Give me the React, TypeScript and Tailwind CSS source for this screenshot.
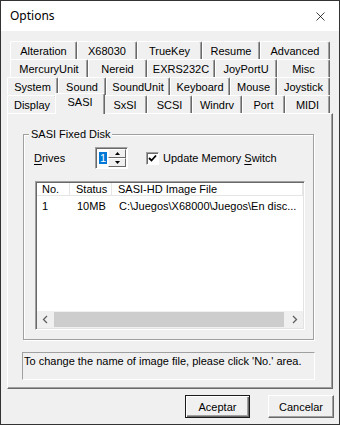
import { X } from "lucide-react";

const rows = [
  {
    offset: "ml-[9px]",
    tabs: [
      { label: "Alteration", w: "w-[67px]" },
      { label: "X68030", w: "w-[60px]" },
      { label: "TrueKey", w: "w-[65px]" },
      { label: "Resume", w: "w-[58px]" },
      { label: "Advanced", w: "w-[70px]" },
    ],
  },
  {
    offset: "ml-[9px]",
    tabs: [
      { label: "MercuryUnit", w: "w-[78px]" },
      { label: "Nereid", w: "w-[59px]" },
      { label: "EXRS232C", w: "w-[68px]" },
      { label: "JoyPortU", w: "w-[62px]" },
      { label: "Misc", w: "w-[53px]" },
    ],
  },
  {
    offset: "ml-[6px]",
    tabs: [
      { label: "System", w: "w-[51px]" },
      { label: "Sound", w: "w-[48px]" },
      { label: "SoundUnit", w: "w-[64px]" },
      { label: "Keyboard", w: "w-[60px]" },
      { label: "Mouse", w: "w-[47px]" },
      { label: "Joystick", w: "w-[53px]" },
    ],
  },
  {
    offset: "ml-[6px]",
    tabs: [
      { label: "Display", w: "w-[50px]" },
      { label: "SASI", w: "w-[50px]", active: true },
      { label: "SxSI", w: "w-[44px]" },
      { label: "SCSI", w: "w-[45px]" },
      { label: "Windrv", w: "w-[50px]" },
      { label: "Port", w: "w-[43px]" },
      { label: "MIDI", w: "w-[45px]" },
    ],
  },
];

const Tab = ({ label, w, active }: { label: string; w: string; active?: boolean }) => {
  if (active) {
    return (
      <div
        className={`${w} relative z-10 -mx-[2px] -mt-[2px] h-[21px] flex justify-center pt-[1px] bg-[#f0f0f0] border-t border-l border-r border-t-white border-l-white border-r-[#696969] rounded-t-[2px] shadow-[inset_-1px_0_0_#a0a0a0]`}
      >
        {label}
      </div>
    );
  }
  return (
    <div
      className={`${w} h-[18px] flex items-center justify-center border-t border-l border-r border-t-white border-l-white border-r-[#696969] rounded-t-[2px] shadow-[inset_-1px_0_0_#a0a0a0]`}
    >
      {label}
    </div>
  );
};

const Chevron = ({ left }: { left?: boolean }) => (
  <svg width="7" height="9" viewBox="0 0 7 9">
    <path
      d={left ? "M5 1 L1.5 4.5 L5 8" : "M2 1 L5.5 4.5 L2 8"}
      fill="none"
      stroke="#606060"
      strokeWidth="1.3"
    />
  </svg>
);

const Triangle = ({ up }: { up?: boolean }) => (
  <svg width="5" height="3" viewBox="0 0 5 3">
    <path d={up ? "M2.5 0 L5 3 L0 3 Z" : "M0 0 L5 0 L2.5 3 Z"} fill="#000" />
  </svg>
);

export default function App() {
  return (
    <div className="w-[340px] h-[425px] border border-[#333] bg-[#f0f0f0] flex flex-col text-[11px] leading-[14px] text-black font-['Liberation_Sans',Arial,sans-serif]">
      {/* title bar */}
      <div className="h-[30px] bg-white flex items-center justify-between pl-[9px] pr-[11px]">
        <span className="text-[12px] font-['Noto_Sans','Liberation_Sans',sans-serif]">Options</span>
        <X size={15} strokeWidth={1.2} />
      </div>

      {/* tabs */}
      <div className="pt-[10px] flex flex-col">
        {rows.map((row, i) => (
          <div key={i} className={`${row.offset} flex h-[18px]`}>
            {row.tabs.map((t) => (
              <Tab key={t.label} label={t.label} w={t.w} active={t.active} />
            ))}
          </div>
        ))}
      </div>

      {/* panel */}
      <div className="ml-[6px] w-[326px] h-[276px] border border-t-white border-l-white border-r-[#696969] border-b-[#696969] shadow-[inset_-1px_-1px_0_#a0a0a0] flex flex-col">
        <div className="ml-[15px] mt-[20px] w-[291px] h-[206px] border border-[#a0a0a0] shadow-[1px_1px_0_#fff,inset_1px_1px_0_#fff] flex flex-col">
          <div className="-mt-[8px] ml-[5px] px-[2px] w-fit bg-[#f0f0f0]">SASI Fixed Disk</div>

          <div className="mt-[6px] ml-[10px] h-[22px] flex items-center">
            <span className="w-[61px]">
              <u className="underline-offset-[2px]">D</u>rives
            </span>
            <div className="w-[33px] h-[22px] flex border border-t-[#a0a0a0] border-l-[#a0a0a0] border-r-white border-b-white shadow-[inset_1px_1px_0_#696969] bg-white">
              <div className="flex-1 flex items-center justify-end pr-[1px]">
                <span className="bg-[#0078d7] text-white px-[1px] leading-[12px]">1</span>
              </div>
              <div className="w-[19px] flex flex-col p-[1px] pl-0">
                <div className="flex-1 bg-[#f0f0f0] flex items-center justify-center border border-t-white border-l-white border-r-[#696969] border-b-[#696969]">
                  <Triangle up />
                </div>
                <div className="flex-1 bg-[#f0f0f0] flex items-center justify-center border border-t-white border-l-white border-r-[#696969] border-b-[#696969]">
                  <Triangle />
                </div>
              </div>
            </div>
            <div className="ml-[18px] w-[13px] h-[13px] bg-white border border-t-[#a0a0a0] border-l-[#a0a0a0] border-r-white border-b-white shadow-[inset_1px_1px_0_#696969] flex items-center justify-center">
              <svg width="9" height="9" viewBox="0 0 9 9">
                <path d="M1 4 L3.5 6.5 L8 1.5" fill="none" stroke="#000" strokeWidth="1.8" />
              </svg>
            </div>
            <span className="ml-[4px]">
              Update Memory <u className="underline-offset-[2px]">S</u>witch
            </span>
          </div>

          {/* list view */}
          <div className="mt-[12px] ml-[11px] w-[270px] h-[149px] bg-white border border-t-[#a0a0a0] border-l-[#a0a0a0] border-r-white border-b-white shadow-[inset_1px_1px_0_#696969,inset_-1px_-1px_0_#e3e3e3] p-[1px] flex flex-col">
            <div className="h-[13px] flex border-b border-[#e5e5e5] leading-[12px]">
              <div className="w-[33px] pl-[5px] border-r border-[#e5e5e5]">No.</div>
              <div className="w-[42px] pl-[6px] border-r border-[#e5e5e5]">Status</div>
              <div className="flex-1 pl-[6px] border-r border-[#e5e5e5]">SASI-HD Image File</div>
            </div>
            <div className="mt-[3px] h-[14px] flex items-center whitespace-nowrap">
              <div className="w-[33px] pl-[5px]">1</div>
              <div className="w-[42px] pl-[7px]">10MB</div>
              <div className="flex-1 pl-[7px] overflow-hidden">C:\Juegos\X68000\Juegos\En disc...</div>
            </div>
            <div className="mt-auto h-[17px] flex bg-[#f0f0f0]">
              <div className="w-[17px] flex items-center justify-center">
                <Chevron left />
              </div>
              <div className="flex-1 flex items-center">
                <div className="w-[230px] h-[15px] bg-[#cdcdcd]" />
              </div>
              <div className="w-[17px] flex items-center justify-center">
                <Chevron />
              </div>
            </div>
          </div>
        </div>

        <div className="mt-[12px] ml-[14px] w-[293px] h-[28px] border border-t-[#a0a0a0] border-l-[#a0a0a0] border-r-white border-b-white pl-[1px] pt-[1px] whitespace-nowrap">
          To change the name of image file, please click 'No.' area.
        </div>
      </div>

      {/* buttons */}
      <div className="mt-[6px] pr-[5px] flex justify-end gap-[18px]">
        <button className="w-[65px] h-[23px] border border-[#1a1a1a] bg-[#f0f0f0] shadow-[inset_1px_1px_0_#fff,inset_-1px_-1px_0_#696969,inset_-2px_-2px_0_#a0a0a0] flex items-center justify-center">
          Aceptar
        </button>
        <button className="w-[66px] h-[23px] border border-t-white border-l-white border-r-[#696969] border-b-[#696969] bg-[#f0f0f0] shadow-[inset_-1px_-1px_0_#a0a0a0] flex items-center justify-center">
          Cancelar
        </button>
      </div>
    </div>
  );
}
